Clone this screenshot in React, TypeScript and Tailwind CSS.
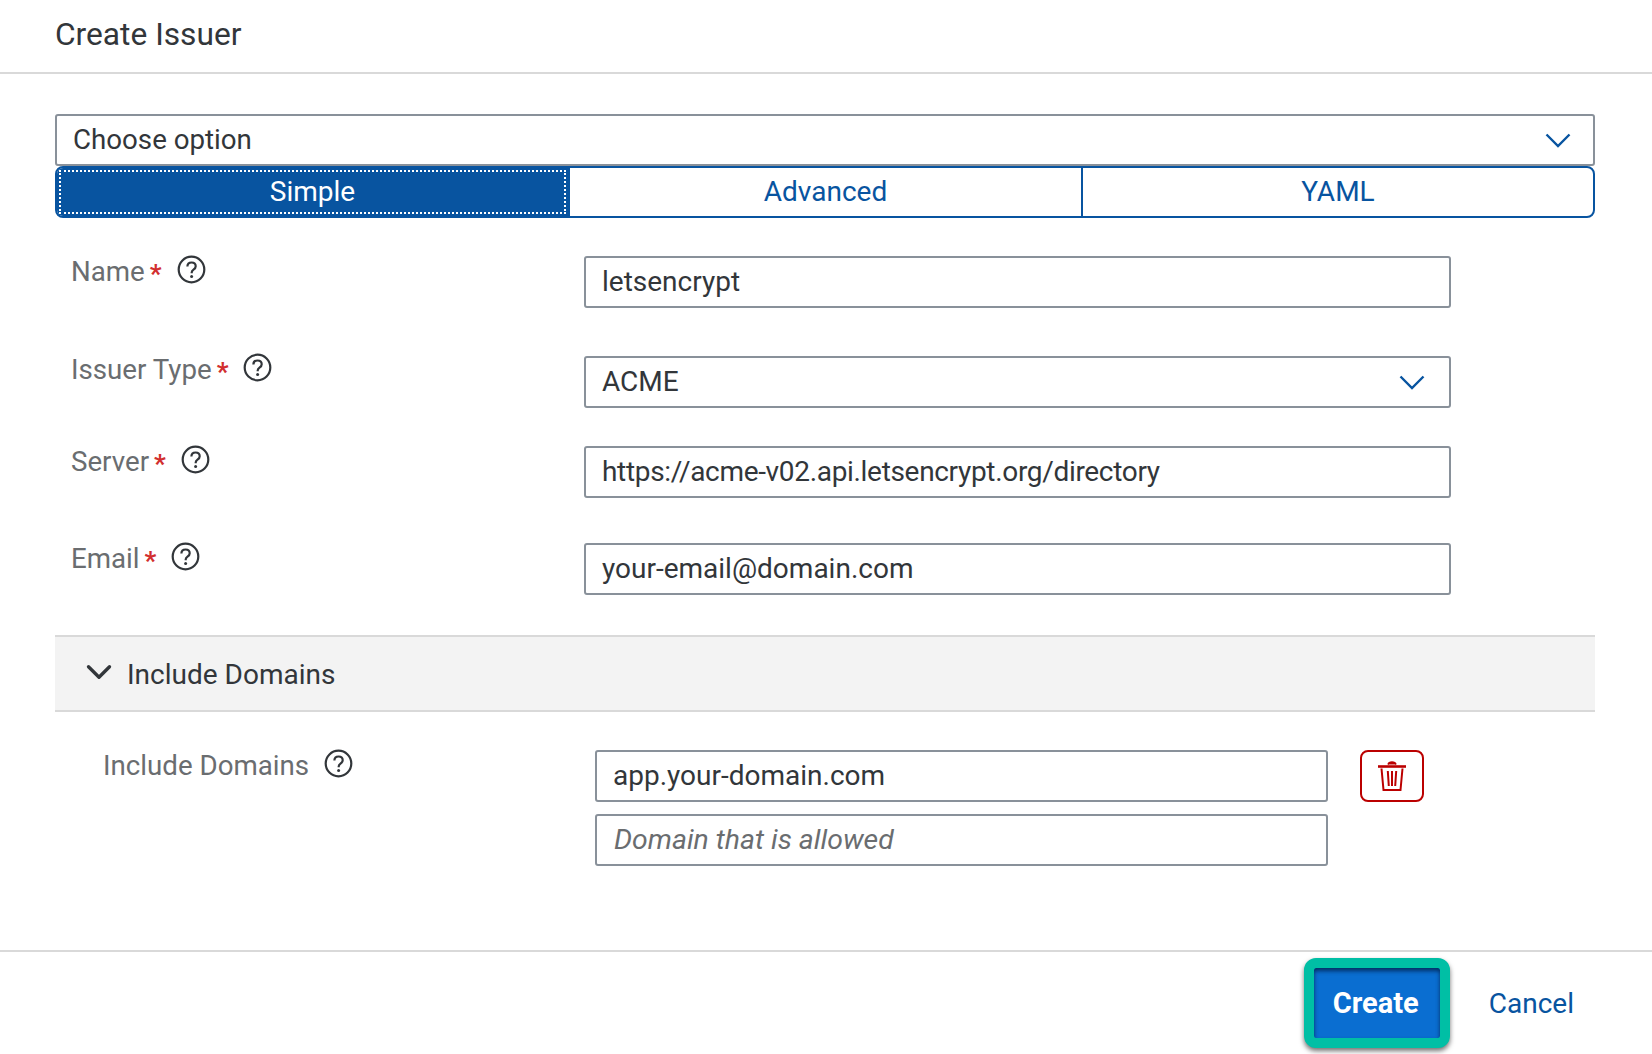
import { ChevronDown } from 'lucide-react'

const FONT = "font-['Roboto',sans-serif]"

function HelpIcon() {
  return (
    <svg width="29" height="29" viewBox="0 0 29 29" fill="none" className="shrink-0">
      <circle cx="14.5" cy="14.5" r="12.8" stroke="#32363a" strokeWidth="2.2" />
      <path
        d="M10.400 11.600c0-2.500 1.800-4.100 4.200-4.100s4.100 1.500 4.100 3.700c0 1.700-.9 2.600-2.200 3.500-1.200.8-1.800 1.500-1.800 2.900v.6"
        stroke="#32363a"
        strokeWidth="2.200"
      />
      <circle cx="14.600" cy="21.600" r="1.500" fill="#32363a" />
    </svg>
  )
}

function FieldLabel({ text, required = true, className }: { text: string; required?: boolean; className: string }) {
  return (
    <div className={`flex items-center text-[27.7px] leading-[36px] text-[#6a6d70] ${className}`}>
      <span>{text}</span>
      {required && <span className="ml-[5px] mt-[5px] text-[26px] font-bold text-[#d22f2f]">*</span>}
      <span className="ml-[15px] -mt-[5px]">
        <HelpIcon />
      </span>
    </div>
  )
}

function Input({ value, placeholder, arrow, tight }: { value?: string; placeholder?: string; arrow?: boolean; tight?: boolean }) {
  return (
    <div className="flex h-[52px] w-full items-center justify-between rounded-[3px] border-2 border-[#89919a] bg-white pl-[16px] pr-[24px] text-[28px] text-[#32363a]">
      {placeholder ? (
        <span className="ml-[1px] text-[28.4px] italic text-[#6a6d70]">{placeholder}</span>
      ) : (
        <span className={tight ? 'tracking-[-0.32px]' : ''}>{value}</span>
      )}
      {arrow && <Arrow />}
    </div>
  )
}

function Arrow() {
  return (
    <svg width="26" height="16" viewBox="0 0 26 16" fill="none">
      <path d="M1.500 2.500l11.500 11.500L24.500 2.500" stroke="#0854a0" strokeWidth="2.400" />
    </svg>
  )
}

function Row({
  label,
  value,
  arrow,
  tight,
  className,
  labelClass = '-mt-[5px]',
}: {
  label: string
  value: string
  arrow?: boolean
  tight?: boolean
  className: string
  labelClass?: string
}) {
  return (
    <div className={`flex pl-[16px] ${className}`}>
      <div className="w-[513px] shrink-0">
        <FieldLabel text={label} className={labelClass} />
      </div>
      <div className="w-[867px]">
        <Input value={value} arrow={arrow} tight={tight} />
      </div>
    </div>
  )
}

function TrashIcon() {
  return (
    <svg width="30" height="32" viewBox="0 0 30 32" fill="none" stroke="#bb0000" strokeWidth="2">
      <path d="M1 6.500h28" strokeWidth="2.600" />
      <path d="M11 4.500c.5-2 1.800-2.500 4-2.500s3.500.5 4 2.500" fill="#bb0000" strokeWidth="1.500" />
      <path d="M4.500 8.500l2 21.500h17l2-21.500" />
      <path d="M10.800 11l1 15M15 11v15M19.200 11l-1 15" />
    </svg>
  )
}

export default function App() {
  return (
    <div className={`${FONT} flex h-[1054px] w-[1652px] flex-col overflow-hidden bg-white`}>
      <header className="flex h-[74px] shrink-0 items-center border-b-2 border-[#d9d9d9] pb-[3px] pl-[55px] text-[31.7px] text-[#32363a]">
        Create Issuer
      </header>

      <main className="flex-1">
        <div className="ml-[55px] w-[1540px] pt-[40px]">
          <div className="flex h-[52px] items-center justify-between rounded-[3px] border-2 border-[#89919a] pl-[16px] pr-[22px] text-[27.7px] text-[#32363a]">
            <span>Choose option</span>
            <Arrow />
          </div>

          <div className="flex h-[52px] overflow-hidden rounded-[8px] border-2 border-[#0854a0] text-[28px] text-[#0854a0]">
            <div className="flex w-[513px] items-center bg-[#0854a0] text-white">
              <div className="my-[2px] ml-[2px] mr-[4px] flex h-[calc(100%-4px)] min-w-0 flex-1 items-center justify-center border-2 border-dotted border-white">
                Simple
              </div>
            </div>
            <div className="flex w-[513px] items-center justify-center border-r-2 border-[#0854a0]">Advanced</div>
            <div className="flex flex-1 items-center justify-center">YAML</div>
          </div>

          <Row label="Name" value="letsencrypt" className="mt-[38px]" />
          <Row label="Issuer Type" value="ACME" arrow className="mt-[48px]" labelClass="-mt-[7px]" />
          <Row label="Server" value="https://acme-v02.api.letsencrypt.org/directory" tight className="mt-[38px]" />
          <Row label="Email" value="your-email@domain.com" className="mt-[45px]" />

          <div className="mt-[40px] flex h-[77px] items-center border-y-2 border-[#d9d9d9] bg-[#f3f3f3] pl-[23px] text-[28px] text-[#32363a]">
            <ChevronDown size={42} strokeWidth={1.900} className="-mt-[3px] mr-[7px] text-[#32363a]" />
            <span className="mt-[2px]">Include Domains</span>
          </div>

          <div className="mt-[38px] flex pl-[48px]">
            <div className="w-[492px] shrink-0">
              <FieldLabel text="Include Domains" required={false} className="-mt-[2px]" />
            </div>
            <div className="flex w-[733px] flex-col gap-[12px]">
              <Input value="app.your-domain.com" />
              <Input placeholder="Domain that is allowed" />
            </div>
            <button className="ml-[32px] flex h-[52px] w-[64px] items-center justify-center rounded-[8px] border-2 border-[#bb0000] bg-white">
              <TrashIcon />
            </button>
          </div>
        </div>
      </main>

      <footer className="flex h-[104px] shrink-0 items-start justify-end border-t-2 border-[#d9d9d9] pr-[78px] pt-[6px]">
        <button className="flex h-[90px] w-[146px] items-center justify-center rounded-[12px] border-[10px] border-[#00bfa5] bg-[#0a6ed1] pr-[2px] pt-[2px] text-[29px] font-bold text-white shadow-[0_3px_5px_rgba(0,0,0,0.55),inset_0_3px_4px_rgba(0,30,70,0.8)]">
          Create
        </button>
        <span className="ml-[39px] mt-[25px] text-[28px] text-[#0854a0]">Cancel</span>
      </footer>
    </div>
  )
}
